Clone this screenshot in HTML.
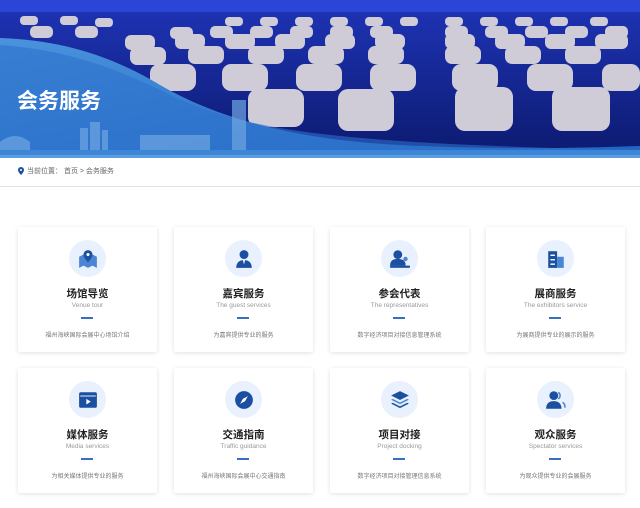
<!DOCTYPE html>
<html><head><meta charset="utf-8"><style>
*{margin:0;padding:0;box-sizing:border-box}
body{width:640px;height:508px;overflow:hidden;background:#fff;font-family:"Liberation Sans","Noto Sans CJK SC",sans-serif}
.banner{position:absolute;left:0;top:0;width:640px;height:158px;overflow:hidden}
.crumb{position:absolute;top:166px;left:18px;font-size:7px;color:#666;display:flex;align-items:center;gap:3px}
.hr{position:absolute;top:186px;left:0;width:640px;height:1px;background:#e3e3e3}
.card{position:absolute;width:139px;height:125px;background:#fff;box-shadow:0 1px 5px rgba(0,0,0,.12);border-radius:2px;text-align:center}
.ic{position:absolute;left:51px;top:13px;width:37px;height:37px;border-radius:50%;background:#e8f1fd;display:flex;align-items:center;justify-content:center}
.t{position:absolute;top:59px;width:100%;font-size:10.5px;font-weight:bold;color:#222}
.e{position:absolute;top:75px;width:100%;font-size:6.5px;color:#999}
.l{position:absolute;top:90px;left:63px;width:12px;height:1.5px;background:#3a6fc0}
.d{position:absolute;top:103px;width:100%;font-size:6px;color:#777}
</style></head><body>
<div class="banner">
<svg width="640" height="158" viewBox="0 0 640 158">
<defs>
<linearGradient id="bg" x1="0" y1="0" x2="0" y2="1"><stop offset="0" stop-color="#1f34b8"/><stop offset="1" stop-color="#0c1a6e"/></linearGradient>
<linearGradient id="lb" x1="0" y1="0" x2="1" y2="1"><stop offset="0" stop-color="#4a93dc"/><stop offset="1" stop-color="#1f64c4"/></linearGradient>
</defs>
<rect width="640" height="158" fill="url(#bg)"/>
<rect y="0" width="640" height="12" fill="#2b45d8"/>
<g fill="#cfccd8">
<rect x="20" y="16" width="18" height="9" rx="4"/><rect x="60" y="16" width="18" height="9" rx="4"/><rect x="95" y="18" width="18" height="9" rx="4"/><rect x="225" y="17" width="18" height="9" rx="4"/><rect x="260" y="17" width="18" height="9" rx="4"/><rect x="295" y="17" width="18" height="9" rx="4"/><rect x="330" y="17" width="18" height="9" rx="4"/><rect x="365" y="17" width="18" height="9" rx="4"/><rect x="400" y="17" width="18" height="9" rx="4"/><rect x="445" y="17" width="18" height="9" rx="4"/><rect x="480" y="17" width="18" height="9" rx="4"/><rect x="515" y="17" width="18" height="9" rx="4"/><rect x="550" y="17" width="18" height="9" rx="4"/><rect x="590" y="17" width="18" height="9" rx="4"/>
<rect x="30" y="26" width="23" height="12" rx="5"/><rect x="75" y="26" width="23" height="12" rx="5"/><rect x="170" y="27" width="23" height="12" rx="5"/><rect x="210" y="26" width="23" height="12" rx="5"/><rect x="250" y="26" width="23" height="12" rx="5"/><rect x="290" y="26" width="23" height="12" rx="5"/><rect x="330" y="26" width="23" height="12" rx="5"/><rect x="370" y="26" width="23" height="12" rx="5"/><rect x="445" y="26" width="23" height="12" rx="5"/><rect x="485" y="26" width="23" height="12" rx="5"/><rect x="525" y="26" width="23" height="12" rx="5"/><rect x="565" y="26" width="23" height="12" rx="5"/><rect x="605" y="26" width="23" height="12" rx="5"/>
<rect x="125" y="35" width="30" height="15" rx="6"/><rect x="175" y="34" width="30" height="15" rx="6"/><rect x="225" y="34" width="30" height="15" rx="6"/><rect x="275" y="34" width="30" height="15" rx="6"/><rect x="325" y="34" width="30" height="15" rx="6"/><rect x="375" y="34" width="30" height="15" rx="6"/><rect x="445" y="34" width="30" height="15" rx="6"/><rect x="495" y="34" width="30" height="15" rx="6"/><rect x="545" y="34" width="30" height="15" rx="6"/><rect x="595" y="34" width="33" height="15" rx="6"/>
<rect x="130" y="47" width="36" height="18" rx="7"/><rect x="188" y="46" width="36" height="18" rx="7"/><rect x="248" y="46" width="36" height="18" rx="7"/><rect x="308" y="46" width="36" height="18" rx="7"/><rect x="368" y="46" width="36" height="18" rx="7"/><rect x="445" y="46" width="36" height="18" rx="7"/><rect x="505" y="46" width="36" height="18" rx="7"/><rect x="565" y="46" width="36" height="18" rx="7"/>
<rect x="150" y="64" width="46" height="27" rx="9"/><rect x="222" y="64" width="46" height="27" rx="9"/><rect x="296" y="64" width="46" height="27" rx="9"/><rect x="370" y="64" width="46" height="27" rx="9"/><rect x="452" y="64" width="46" height="27" rx="9"/><rect x="527" y="64" width="46" height="27" rx="9"/><rect x="602" y="64" width="38" height="27" rx="9"/>
<rect x="248" y="89" width="56" height="38" rx="10"/><rect x="338" y="89" width="56" height="42" rx="10"/><rect x="455" y="87" width="58" height="44" rx="10"/><rect x="552" y="87" width="58" height="44" rx="10"/>
</g>
<path d="M0 38 C60 40 110 55 160 85 C220 120 300 140 400 145 C500 150 580 148 640 146 L640 158 L0 158 Z" fill="url(#lb)"/>
<path d="M0 45 C70 50 120 70 170 95 C240 128 320 144 640 150 L640 158 L0 158Z" fill="#2d72cc" opacity=".6"/>
<g fill="#6fa6e2" opacity=".7">
<rect x="80" y="128" width="8" height="22"/><rect x="90" y="122" width="10" height="28"/><rect x="102" y="130" width="6" height="20"/><rect x="140" y="135" width="70" height="15"/><rect x="232" y="100" width="14" height="50"/><path d="M0 142 Q15 130 30 142 L30 150 L0 150Z"/>
</g>
<rect y="150" width="640" height="8" fill="#3d86d6"/>
<rect y="155" width="640" height="3" fill="#5c9ce0"/>
<text x="17" y="108" font-size="21" font-weight="bold" fill="#fff" font-family="Liberation Sans,Noto Sans CJK SC,sans-serif">会务服务</text>
</svg>
</div>
<div class="crumb"><svg width="6" height="8" viewBox="0 0 6 8"><path d="M3 0a3 3 0 0 0-3 3c0 2 3 5 3 5s3-3 3-5a3 3 0 0 0-3-3z" fill="#1b4fa0"/><circle cx="3" cy="3" r="1" fill="#fff"/></svg><span>当前位置：&nbsp;首页 &gt; 会务服务</span></div>
<div class="hr"></div>

<div class="card" style="left:18px;top:227px"><div class="ic"><svg width="20" height="20" viewBox="0 0 18 18"><path d="M1 7l4-2 4 2 4-2 4 2v10l-4-2-4 2-4-2-4 2z" fill="#4a86d4"/><path d="M9 1a4 4 0 0 0-4 4c0 3 4 7 4 7s4-4 4-7a4 4 0 0 0-4-4z" fill="#1b4fa0"/><circle cx="9" cy="5" r="1.4" fill="#fff"/></svg></div><div class="t">场馆导览</div><div class="e">Venue tour</div><div class="l"></div><div class="d">福州海峡国际会展中心场馆介绍</div></div>
<div class="card" style="left:174px;top:227px"><div class="ic"><svg width="20" height="20" viewBox="0 0 18 18"><circle cx="9" cy="5" r="4" fill="#1b4fa0"/><path d="M2 17c0-5 3-7 7-7s7 2 7 7z" fill="#1b4fa0"/><path d="M8 10h2l-1 4z" fill="#fff"/></svg></div><div class="t">嘉宾服务</div><div class="e">The guest services</div><div class="l"></div><div class="d">为嘉宾提供专业的服务</div></div>
<div class="card" style="left:330px;top:227px"><div class="ic"><svg width="22" height="20" viewBox="0 0 20 18"><circle cx="8" cy="5" r="4" fill="#1b4fa0"/><path d="M1 15c0-5 3-6 7-6s6 1 7 4v2z" fill="#1b4fa0"/><circle cx="15" cy="9" r="2" fill="#4a86d4"/><rect x="1" y="15" width="18" height="2" fill="#1b4fa0"/></svg></div><div class="t">参会代表</div><div class="e">The representatives</div><div class="l"></div><div class="d">数字经济项目对接信息管理系统</div></div>
<div class="card" style="left:486px;top:227px"><div class="ic"><svg width="20" height="20" viewBox="0 0 18 18"><rect x="2" y="2" width="8" height="15" fill="#1b4fa0"/><rect x="10" y="7" width="6" height="10" fill="#4a86d4"/><g fill="#fff"><rect x="4" y="5" width="4" height="1.3"/><rect x="4" y="9" width="4" height="1.3"/><rect x="4" y="13" width="4" height="1.3"/></g></svg></div><div class="t">展商服务</div><div class="e">The exhibitors service</div><div class="l"></div><div class="d">为展商提供专业的展示的服务</div></div>

<div class="card" style="left:18px;top:368px"><div class="ic"><svg width="20" height="20" viewBox="0 0 18 18"><rect x="1" y="2" width="16" height="14" rx="1.5" fill="#1b4fa0"/><rect x="2" y="5" width="14" height="0.8" fill="#fff"/><path d="M7.5 8v5l4-2.5z" fill="#fff"/></svg></div><div class="t">媒体服务</div><div class="e">Media services</div><div class="l"></div><div class="d">为相关媒体提供专业的服务</div></div>
<div class="card" style="left:174px;top:368px"><div class="ic"><svg width="20" height="20" viewBox="0 0 18 18"><circle cx="9" cy="9" r="8" fill="#1b4fa0"/><path d="M12.5 5.5L10 10 5.5 12.5 8 8z" fill="#fff"/></svg></div><div class="t">交通指南</div><div class="e">Traffic guidance</div><div class="l"></div><div class="d">福州海峡国际会展中心交通指南</div></div>
<div class="card" style="left:330px;top:368px"><div class="ic"><svg width="20" height="20" viewBox="0 0 18 18"><path d="M9 1l8 4-8 4-8-4z" fill="#1b4fa0"/><path d="M2.5 8l6.5 3.2L15.5 8l1.5.8-8 4-8-4z" fill="#4a86d4"/><path d="M2.5 11.5l6.5 3.2 6.5-3.2 1.5.8-8 4-8-4z" fill="#1b4fa0"/></svg></div><div class="t">项目对接</div><div class="e">Project docking</div><div class="l"></div><div class="d">数字经济项目对接管理信息系统</div></div>
<div class="card" style="left:486px;top:368px"><div class="ic"><svg width="22" height="20" viewBox="0 0 20 18"><circle cx="8" cy="5" r="4" fill="#1b4fa0"/><path d="M1 17c0-5 3-7 7-7s7 2 7 7z" fill="#1b4fa0"/><path d="M12 2a3.5 3.5 0 0 1 0 6" stroke="#4a86d4" stroke-width="1.4" fill="none"/><path d="M16 11a5 5 0 0 1 2 5" stroke="#4a86d4" stroke-width="1.4" fill="none"/></svg></div><div class="t">观众服务</div><div class="e">Spectator services</div><div class="l"></div><div class="d">为观众提供专业的会展服务</div></div>
</body></html>
